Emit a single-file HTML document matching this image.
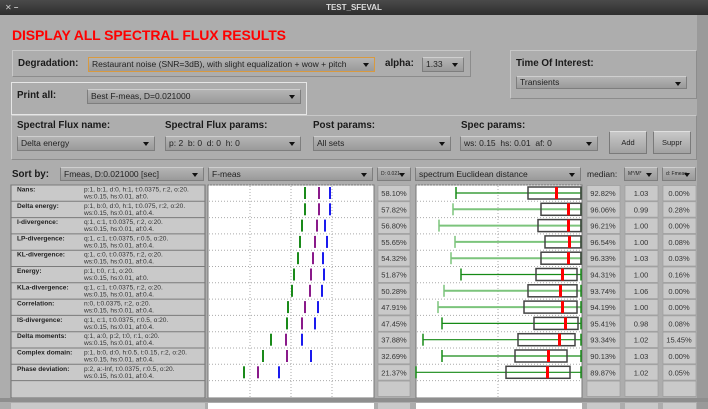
<!DOCTYPE html>
<html><head><meta charset="utf-8"><style>
*{margin:0;padding:0;box-sizing:border-box}
body{width:708px;height:409px;overflow:hidden;background:#adadad;font-family:"Liberation Sans","DejaVu Sans",sans-serif;position:relative}
.a{position:absolute}
.tb{left:0;top:0;width:708px;height:15px;background:linear-gradient(#4a4a4a,#2e2e2e);color:#ddd;font-size:8px;font-weight:bold;text-align:center;line-height:15px}
.title{left:12px;top:27px;color:#f00;font-weight:bold;font-size:14px;letter-spacing:-0.1px}
.pan{border:1px solid #c8c8c8;border-right-color:#8c8c8c;border-bottom-color:#8c8c8c}
.lbl{font-size:9.8px;font-weight:bold;color:#1a1a1a}
.dd{background:linear-gradient(#b4b4b4,#9a9a9a);border:1px solid #7e7e7e;border-top-color:#cfcfcf;font-size:8.5px;color:#222;line-height:13px;padding-left:3px;white-space:nowrap;overflow:hidden}
.dd:after{content:"";position:absolute;right:5px;top:5px;border-left:3px solid transparent;border-right:3px solid transparent;border-top:4px solid #111}
.btn{background:linear-gradient(#c8c8c8,#a2a2a2);border:1px solid #7a7a7a;border-top-color:#e0e0e0;font-size:7.5px;text-align:center;line-height:21px;color:#222}
</style></head><body>
<div class="a tb">TEST_SFEVAL<span style="position:absolute;left:5px;color:#ccc">✕ –</span></div>
<div class="a title">DISPLAY ALL SPECTRAL FLUX RESULTS</div>

<div class="a pan" style="left:12px;top:50px;width:459px;height:27px"></div>
<div class="a lbl" style="left:18px;top:58px">Degradation:</div>
<div class="a dd" style="left:88px;top:57px;width:287px;height:15px;border-color:#d89a40">Restaurant noise (SNR=3dB), with slight equalization + wow + pitch</div>
<div class="a lbl" style="left:385px;top:58px">alpha:</div>
<div class="a dd" style="left:422px;top:57px;width:42px;height:15px">1.33</div>

<div class="a pan" style="left:510px;top:50px;width:187px;height:49px"></div>
<div class="a lbl" style="left:516px;top:58px">Time Of Interest:</div>
<div class="a dd" style="left:516px;top:76px;width:171px;height:13px;line-height:11px">Transients</div>

<div class="a pan" style="left:11px;top:82px;width:296px;height:33px;border-color:#e6e6e6"></div>
<div class="a lbl" style="left:17px;top:90px">Print all:</div>
<div class="a dd" style="left:87px;top:89px;width:214px;height:15px">Best F-meas, D=0.021000</div>

<div class="a pan" style="left:11px;top:115px;width:686px;height:45px"></div>
<div class="a lbl" style="left:17px;top:120px">Spectral Flux name:</div>
<div class="a lbl" style="left:165px;top:120px">Spectral Flux params:</div>
<div class="a lbl" style="left:313px;top:120px">Post params:</div>
<div class="a lbl" style="left:461px;top:120px">Spec params:</div>
<div class="a dd" style="left:17px;top:136px;width:138px;height:15px">Delta energy</div>
<div class="a dd" style="left:165px;top:136px;width:136px;height:15px">p: 2&nbsp; b: 0&nbsp; d: 0&nbsp; h: 0</div>
<div class="a dd" style="left:313px;top:136px;width:138px;height:15px">All sets</div>
<div class="a dd" style="left:460px;top:136px;width:138px;height:15px">ws: 0.15&nbsp; hs: 0.01&nbsp; af: 0</div>
<div class="a btn" style="left:609px;top:131px;width:38px;height:23px">Add</div>
<div class="a btn" style="left:653px;top:131px;width:38px;height:23px">Suppr</div>

<div class="a lbl" style="left:12px;top:169px">Sort by:</div>
<div class="a dd" style="left:60px;top:167px;width:144px;height:14px">Fmeas, D:0.021000 [sec]</div>
<div class="a dd" style="left:208px;top:167px;width:165px;height:14px">F-meas</div>
<div class="a dd" style="left:377px;top:167px;width:34px;height:14px;font-size:5px">D: 0.021</div>
<div class="a dd" style="left:415px;top:167px;width:166px;height:14px">spectrum Euclidean distance</div>
<div class="a" style="left:587px;top:169px;font-size:8.5px;color:#222">median:</div>
<div class="a dd" style="left:624px;top:167px;width:34px;height:14px;font-size:5px">M*/M*</div>
<div class="a dd" style="left:662px;top:167px;width:34px;height:14px;font-size:5px">d: Fmeas</div>

<svg class="a" style="left:0;top:0" width="708" height="409" font-family="Liberation Sans,DejaVu Sans,sans-serif">
<rect x="697" y="15" width="11" height="394" fill="#9a9a9a"/>
<rect x="11" y="185" width="194" height="213" fill="#c9c9c9" stroke="#6e6e6e"/>
<rect x="208" y="185" width="166" height="213" fill="#fff" stroke="#777"/>
<rect x="416" y="185" width="166" height="213" fill="#fff" stroke="#777"/>
<g stroke="#aaa" stroke-dasharray="1,2">
<line x1="250" y1="186" x2="250" y2="397"/><line x1="291" y1="186" x2="291" y2="397"/><line x1="332" y1="186" x2="332" y2="397"/>
<line x1="498" y1="186" x2="498" y2="397"/>
</g>
<rect x="0" y="398" width="708" height="4" fill="#8e8e8e"/>
<rect x="11" y="403" width="194" height="6" fill="#c9c9c9"/>
<rect x="208" y="403" width="166" height="6" fill="#fff"/>
<rect x="416" y="403" width="166" height="6" fill="#fff"/>
<rect x="378" y="403" width="32" height="6" fill="#c9c9c9"/>
<rect x="587" y="403" width="33" height="6" fill="#c9c9c9"/>
<rect x="625" y="403" width="33" height="6" fill="#c9c9c9"/>
<rect x="663" y="403" width="33" height="6" fill="#c9c9c9"/>
<g id="rows" font-size="6.6" fill="#333"></g>
</svg>
<script>
var N=[["Nans","p:1, b:1, d:0, h:1, t:0.0375, r:2, o:20.","af:0."],["Delta energy","p:1, b:0, d:0, h:1, t:0.075, r:2, o:20.","af:0.4."],["I-divergence","q:1, c:1, t:0.0375, r:2, o:20.","af:0.4."],["LP-divergence","q:1, c:1, t:0.0375, r:0.5, o:20.","af:0.4."],["KL-divergence","q:1, c:0, t:0.0375, r:2, o:20.","af:0.4."],["Energy","p:1, t:0, r:1, o:20.","af:0."],["KLa-divergence","q:1, c:1, t:0.0375, r:2, o:20.","af:0.4."],["Correlation","n:0, t:0.0375, r:2, o:20.","af:0.4."],["IS-divergence","q:1, c:1, t:0.0375, r:0.5, o:20.","af:0.4."],["Delta moments","q:1, a:0, p:2, t:0, r:1, o:20.","af:0.4."],["Complex domain","p:1, b:0, d:0, h:0.5, t:0.15, r:2, o:20.","af:0.4."],["Phase deviation","p:2, a:-Inf, t:0.0375, r:0.5, o:20.","af:0.4."]];
var P=["58.10","57.82","56.80","55.65","54.32","51.87","50.28","47.91","47.45","37.88","32.69","21.37"];
var M=["92.82","96.06","96.21","96.54","96.33","94.31","93.74","94.19","95.41","93.34","90.13","89.87"];
var R=["1.03","0.99","1.00","1.00","1.03","1.00","1.06","1.00","0.98","1.02","1.03","1.02"];
var L=["0.00","0.28","0.00","0.08","0.03","0.16","0.00","0.00","0.08","15.45","0.00","0.05"];
var B=[[304,318,329],[304,318,329],[301,316,324],[299,314,326],[297,312,322],[293,310,323],[291,309,321],[287,304,317],[286,301,314],[270,285,301],[262,286,310],[243,257,278]];
var X=[[456,528,581,556,0],[453,541,581,568,1],[439,538,581,568,1],[455,545,581,569,1],[451,541,581,568,1],[461,536,577,562,0],[444,528,577,560,1],[438,524,577,562,1],[442,534,578,565,0],[423,518,575,559,0],[442,515,567,548,0],[416,506,570,547,0]];
var s="";
for(var i=0;i<=12;i++){var t=185+16.3*i;
 s+='<line x1="11" x2="205" y1="'+t+'" y2="'+t+'" stroke="#7a7a7a"/>';
 s+='<line x1="209" x2="373" y1="'+t+'" y2="'+t+'" stroke="#aaa" stroke-dasharray="1,2"/>';
 s+='<line x1="417" x2="581" y1="'+t+'" y2="'+t+'" stroke="#aaa" stroke-dasharray="1,2"/>';
 var cols=[[378,32],[587,33],[625,33],[663,33]];
 for(var c=0;c<4;c++)s+='<rect x="'+cols[c][0]+'" y="'+(t+0.5)+'" width="'+cols[c][1]+'" height="15.3" fill="#c9c9c9" stroke="#9a9a9a" stroke-width="0.6"/>';
 if(i==12)break;
 var n=N[i];
 s+='<text x="17" y="'+(t+6.5)+'" font-weight="bold" fill="#222">'+n[0]+':</text>';
 s+='<text x="84" y="'+(t+6.5)+'">'+n[1]+'</text><text x="84" y="'+(t+13.5)+'">ws:0.15, hs:0.01, '+n[2]+'</text>';
 s+='<text x="394" y="'+(t+11)+'" text-anchor="middle" font-size="7.5">'+P[i]+'%</text>';
 s+='<text x="603" y="'+(t+11)+'" text-anchor="middle" font-size="7.5">'+M[i]+'%</text>';
 s+='<text x="641" y="'+(t+11)+'" text-anchor="middle" font-size="7.5">'+R[i]+'</text>';
 s+='<text x="679" y="'+(t+11)+'" text-anchor="middle" font-size="7.5">'+L[i]+'%</text>';
 var b=B[i],cl=["#1a8a1a","#8a1a8a","#1a1aee"];
 for(var k=0;k<3;k++)s+='<rect x="'+b[k]+'" y="'+(t+2)+'" width="2" height="12" fill="'+cl[k]+'"/>';
 var x=X[i],lc=x[4]?"#7cc47c":"#168a16",y=t+8;
 s+='<line x1="'+x[0]+'" x2="581" y1="'+y+'" y2="'+y+'" stroke="'+lc+'" stroke-width="'+(x[4]?2:1.2)+'"/>';
 s+='<line x1="'+x[0]+'" x2="'+x[0]+'" y1="'+(t+2)+'" y2="'+(t+14)+'" stroke="'+lc+'" stroke-width="1.5"/>';
 s+='<line x1="581" x2="581" y1="'+(t+2)+'" y2="'+(t+14)+'" stroke="#168a16" stroke-width="1.5"/>';
 s+='<rect x="'+x[1]+'" y="'+(t+2)+'" width="'+(x[2]-x[1])+'" height="12" fill="none" stroke="#444" stroke-width="1.5"/>';
 s+='<rect x="'+(x[3]-1)+'" y="'+(t+2)+'" width="3" height="12" fill="#f00"/>';
}
document.getElementById("rows").innerHTML=s;
</script>
</body></html>
